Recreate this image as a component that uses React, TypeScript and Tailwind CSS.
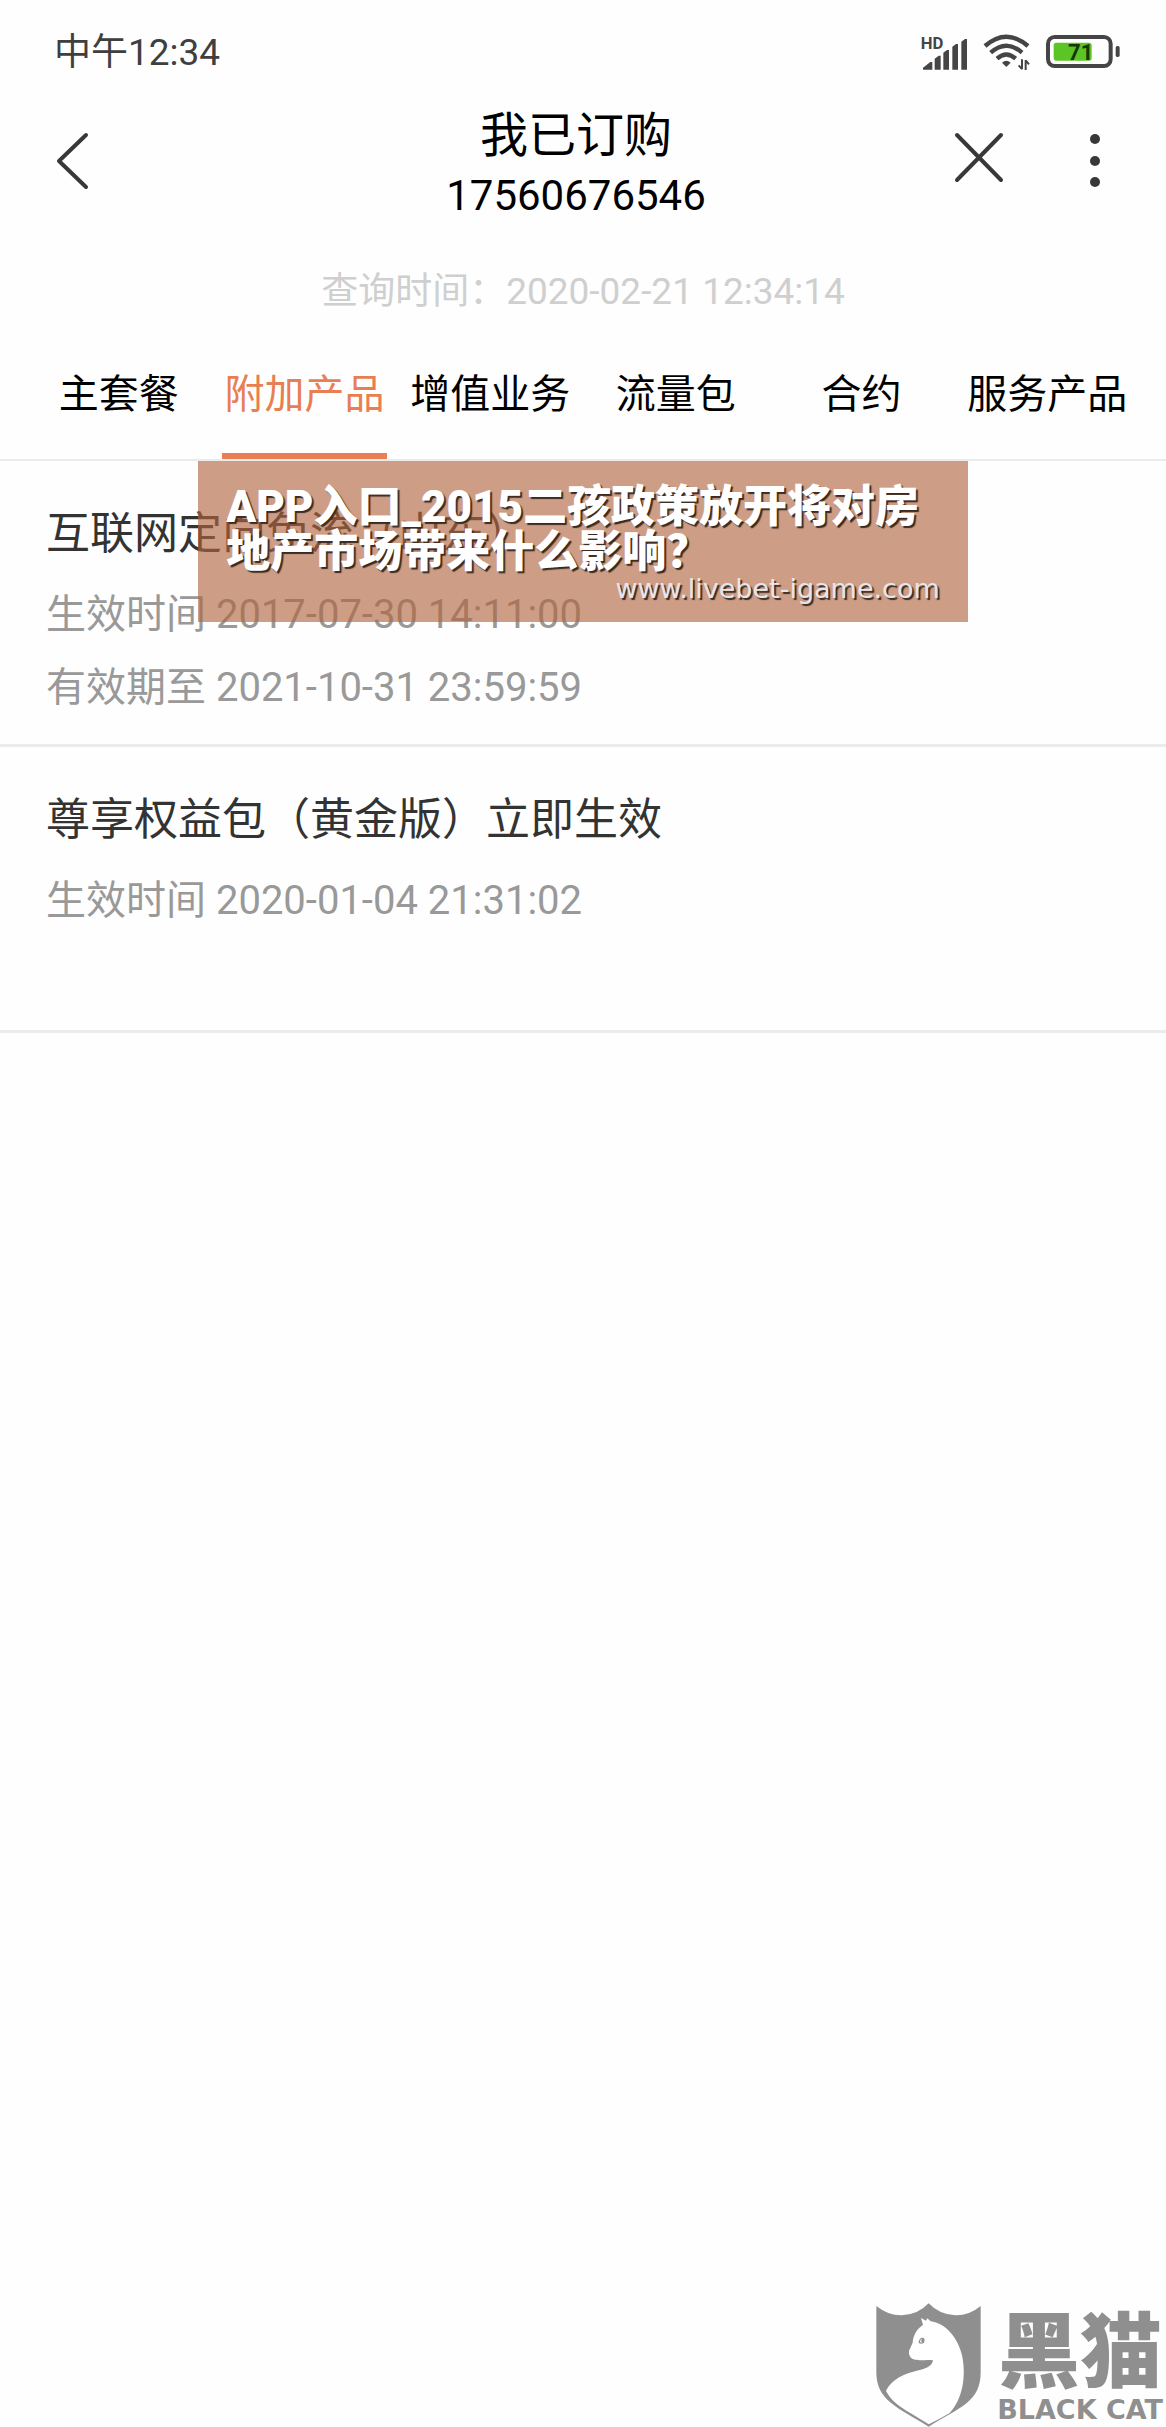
interface Product {
  name: string;
  details: string[];
}

const tabs = ["主套餐", "附加产品", "增值业务", "流量包", "合约", "服务产品"];

const products: Product[] = [
  {
    name: "互联网定向免流（山东）",
    details: ["生效时间 2017-07-30 14:11:00", "有效期至 2021-10-31 23:59:59"],
  },
  {
    name: "尊享权益包（黄金版）立即生效",
    details: ["生效时间 2020-01-04 21:31:02"],
  },
];

function SignalIcon() {
  return (
    <svg viewBox="66 27 138 111" className="h-[37px] w-[46px]" fill="#454545">
      <text x="65" y="75" fontSize="50" fontWeight="700" fontFamily="Roboto, sans-serif">
        HD
      </text>
      <path d="M72 137V131L94 114H100V137Z" />
      <path d="M107 137V104L119 95H125V137Z" />
      <path d="M133 137V86L144 78H150V137Z" />
      <path d="M160 137V68L171 60H177V137Z" />
      <path d="M187 137V53L198 45H204V137Z" />
    </svg>
  );
}

function WifiIcon() {
  return (
    <svg viewBox="252 36 141 117" className="h-[39px] w-[47px]" fill="none">
      <g stroke="#454545" strokeWidth="13">
        <path d="M258 78Q322 22 387 78" />
        <path d="M275 98Q322 56 369 98" />
        <path d="M294 116Q322 91 350 116" />
      </g>
      <path d="M309 128Q322 116 335 128L322 141Z" fill="#454545" />
      <path d="M369 118V148M369 147L359 136M380 150V120M380 121L390 133" stroke="#454545" strokeWidth="6" />
    </svg>
  );
}

function BatteryIcon() {
  return (
    <svg viewBox="441 36 222 108" className="h-[36px] w-[74px]">
      <rect x="447" y="48" width="188" height="87" rx="20" fill="none" stroke="#454545" strokeWidth="12" />
      <rect x="464" y="65" width="114" height="54" rx="8" fill="#5cc526" />
      <rect x="650" y="75" width="12" height="33" rx="5" fill="#454545" />
      <text x="545" y="116" textAnchor="middle" fontSize="66" fontWeight="700" fontFamily="Roboto, sans-serif" fill="#143806">
        71
      </text>
    </svg>
  );
}

function StatusBar() {
  return (
    <div className="flex h-[102px] items-center justify-between pr-[46px] pl-[54px]">
      <span className="pt-[3px] text-[37px] text-[#3f3f3f]">中午12:34</span>
      <div className="flex items-center gap-4">
        <SignalIcon />
        <WifiIcon />
        <BatteryIcon />
      </div>
    </div>
  );
}

function Header() {
  return (
    <header className="grid grid-cols-[1fr_auto_1fr] items-start text-black">
      <button type="button" aria-label="返回" className="mt-[29px] ml-[55px] w-9">
        <svg viewBox="0 0 36 60" className="h-[60px] w-9" fill="none" stroke="#383838" strokeWidth="4" strokeLinecap="round" strokeLinejoin="round">
          <path d="M31 4L4 30L31 56" />
        </svg>
      </button>
      <div className="pt-[2px] pr-[14px] text-center">
        <h1 className="text-[48px] leading-[64px]">我已订购</h1>
        <p className="text-[42px] leading-[56px]">17560676546</p>
      </div>
      <div className="mt-[29px] flex items-center justify-end gap-20 pr-[61px]">
        <button type="button" aria-label="关闭">
          <svg viewBox="0 0 52 60" className="h-[60px] w-[52px]" fill="none" stroke="#383838" strokeWidth="4" strokeLinecap="round">
            <path d="M4 4L48 49M48 4L4 49" />
          </svg>
        </button>
        <button type="button" aria-label="更多">
          <svg viewBox="0 0 20 60" className="h-[60px] w-5" fill="#383838">
            <circle cx="10" cy="8" r="5" />
            <circle cx="10" cy="30" r="5" />
            <circle cx="10" cy="51" r="5" />
          </svg>
        </button>
      </div>
    </header>
  );
}

function Tabs() {
  return (
    <nav className="grid h-[142px] grid-cols-6 border-b-2 border-[#ebebeb] px-[26px]">
      {tabs.map((tab) => (
        <button
          key={tab}
          type="button"
          className={
            tab === "附加产品"
              ? "mx-auto w-[165px] border-b-[6px] border-[#e87e51] pt-[17px] text-[40px] whitespace-nowrap text-[#e87e51]"
              : "mx-auto w-[165px] border-b-[6px] border-transparent pt-[17px] text-[40px] whitespace-nowrap text-black"
          }
        >
          {tab}
        </button>
      ))}
    </nav>
  );
}

function Banner() {
  return (
    <div className="absolute top-0 left-[17%] h-[161px] w-[66%] bg-[#b0653e]/63 px-7 pt-6 text-white">
      <p className="font-[Roboto,'Noto_Sans_CJK_SC',sans-serif] text-[44px] leading-[45px] font-black whitespace-nowrap [text-shadow:2px_2px_1px_#3a2a22]">
        APP入口_2015二孩政策放开将对房
        <br />
        地产市场带来什么影响？
      </p>
      <p className="text-right font-['DejaVu_Sans',sans-serif] text-[27px] leading-[27px] text-[#e6e6ea] [text-shadow:2px_2px_1px_#3a2a22]">
        www.livebet-igame.com
      </p>
    </div>
  );
}

function BlackCatLogo() {
  return (
    <div className="mt-auto flex items-end justify-end gap-4 pr-[3px] text-[#8f8f8f]">
      <svg viewBox="47 39 315 370" className="h-[124px] w-[105px]">
        <path
          d="M48 47Q84 76 125 75Q173 73 205 39Q237 73 285 75Q326 76 361 47V246C361 335 300 350 205 409C110 350 48 330 48 246Z"
          fill="currentColor"
        />
        <path
          d="M188 104L182 83L197 91L201 84L211 93C255 99 292 140 305 195C318 255 308 325 268 368Q240 385 205 402C150 364 99 347 77 301C94 268 130 250 175 240C203 234 216 224 218 210C200 206 176 213 160 207C148 202 145 192 146 181L157 157C158 136 170 115 188 104Z"
          fill="white"
        />
        <path d="M175 154Q178 141 189 142Q195 145 191 157Q183 163 175 158Z" fill="currentColor" />
        <path d="M179 155Q179 148 184 145Q181 153 185 158Z" fill="white" />
      </svg>
      <div className="flex flex-col items-center gap-[10px] pb-1">
        <span className="font-['Noto_Sans_CJK_SC',sans-serif] text-[82px] leading-[82px] font-black">黑猫</span>
        <span className="font-['DejaVu_Sans',sans-serif] text-[27px] leading-[26px] font-bold">BLACK CAT</span>
      </div>
    </div>
  );
}

export default function App() {
  return (
    <div className="flex min-h-screen flex-col bg-[#fefefe] font-[Roboto,'Noto_Sans_CJK_SC',sans-serif]">
      <StatusBar />
      <Header />
      <p className="mt-[41px] text-center text-[37px] leading-[54px] text-[#cfcfcf]">
        查询时间：2020-02-21 12:34:14
      </p>
      <Tabs />
      <main className="relative">
        {products.map((product) => (
          <section key={product.name} className="min-h-[286px] border-b-[3px] border-[#ebebeb] px-[46px] pt-10">
            <h2 className="mb-[11px] text-[44px] leading-[66px] text-[#333]">{product.name}</h2>
            {product.details.map((detail) => (
              <p key={detail} className="text-[40px] leading-[73px] text-[#999]">
                {detail}
              </p>
            ))}
          </section>
        ))}
        <Banner />
      </main>
      <BlackCatLogo />
    </div>
  );
}
